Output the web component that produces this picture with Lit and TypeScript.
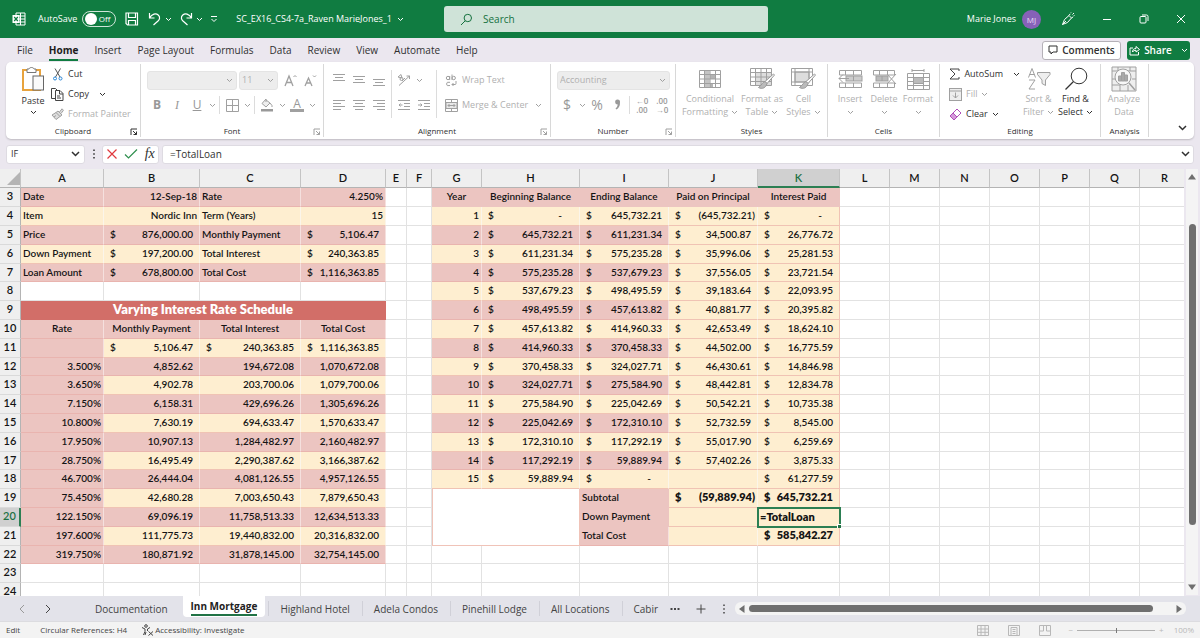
import { LitElement, html, css, svg, nothing } from "lit";
import { customElement } from "lit/decorators.js";
import { classMap } from "lit/directives/class-map.js";

type Cell = { t: string; k: string; span?: number; rows?: number; dollar?: boolean; edit?: boolean };

const icon = (w: number, h: number, body: unknown) =>
  html`<svg class="ic" width=${w} height=${h} viewBox="0 0 ${w} ${h}" fill="none" stroke="currentColor" stroke-width="1" aria-hidden="true">${body}</svg>`;

const chev = () => icon(7, 5, svg`<path d="M1 1L3.5 3.5L6 1"/>`);

const lines = (ys: number[], xs: [number, number][]) =>
  icon(12, 12, svg`${ys.map((y, i) => svg`<path d="M${xs[i][0]} ${y}H${xs[i][1]}"/>`)}`);

const gridLines = svg`<path d="M.5 .5H21.5V17.5H.5ZM.5 4.5H21.5M.5 9H21.5M.5 13.5H21.5M5.5 .5V17.5M11 .5V17.5M16.5 .5V17.5"/>`;
const brush = svg`<path d="M23.5 6L15 13.5L17 15.5L24.5 7Z" fill="#fff" stroke="#999"/><path d="M15 13.5C12.5 14 12 17 8.5 19.5C12 21.5 16 20 17 15.5Z" fill="#bbb" stroke="#999"/>`;

const I = {
  excel: icon(14, 14, svg`<path d="M4 3V1H13V13H4V11M8.5 1V13M4 4H13M4 7H13M4 10H13" /><rect x="0.5" y="3" width="7" height="8" fill="#fff" stroke="none"/><path d="M2.2 5L5.8 9M5.8 5L2.2 9" stroke="#107c41" stroke-width="1.2"/>`),
  save: icon(14, 14, svg`<path d="M1 1H12.5V13H2.5L1 11.5ZM3.5 1V5.5H10.5V1M3.5 13V8.5H10.5V13" stroke-width="1.2"/>`),
  undo: icon(14, 14, svg`<path d="M1.5 1V6H6.5M1.5 6C4 1.5 8 1 10.2 3C12.6 5.3 11.5 7.5 10 9L5.5 13" stroke-width="1.2"/>`),
  redo: icon(14, 14, svg`<path d="M12.5 1V6H7.5M12.5 6C10 1.5 6 1 3.8 3C1.4 5.3 2.5 7.5 4 9L8.5 13" stroke-width="1.2"/>`),
  more: icon(8, 8, svg`<path d="M1 1.5H7M1.5 4L4 6.5L6.5 4"/>`),
  search: icon(13, 13, svg`<circle cx="7.8" cy="5" r="3.7"/><path d="M5.2 7.8L1 12"/>`),
  pen: icon(14, 14, svg`<path d="M1.5 12.5L3.5 7.5L8 3.5L10.5 6L6.5 10.5ZM1.5 12.5L5 9M8 3.5L9 2M10.5 6L12 5M9.5 1.2L10 .5M11.5 2.5L13 1M12.5 4L13.5 3.5"/>`),
  min: icon(10, 10, svg`<path d="M1 5.5H9"/>`),
  restore: icon(10, 10, svg`<rect x="1" y="2.5" width="6" height="6.5" rx="1"/><path d="M3 1H7.5Q9 1 9 2.5V7"/>`),
  close: icon(10, 10, svg`<path d="M1 1L9 9M9 1L1 9"/>`),
  comment: icon(10, 10, svg`<path d="M1 1H9V7H5L3 9V7H1Z"/>`),
  share: icon(11, 11, svg`<path d="M4 3H1V10H9.5V7M3.5 7C3.5 4.5 5 3.5 7 3.5V1.5L10.5 4.5L7 7V5.3C5.5 5.3 4.5 5.5 3.5 7Z"/>`),
  paste: icon(24, 26, svg`<rect x="2" y="4" width="17" height="20" fill="#fff" stroke="#e8a33d" stroke-width="2"/><path d="M6 3H8C8.5 1 12.5 1 13 3H15V6.5H6Z" fill="#fff" stroke="#777"/><rect x="12" y="10" width="10.5" height="14" fill="#fafafa" stroke="#666"/>`),
  cut: icon(10, 13, svg`<path d="M2 .5L7 9M7.5 .5L2.5 9" stroke="#555"/><circle cx="2" cy="10.5" r="1.5" stroke="#2b88d8"/><circle cx="7.5" cy="10.5" r="1.5" stroke="#2b88d8"/>`),
  copy: icon(13, 13, svg`<path d="M4 10.5H.5V.5H4.5L6.5 2.5M4.5 2.5H9L12 5.5V12.5H4.5ZM8.5 2.5V6H12M6 8H9M6 10H10" stroke="#444"/>`),
  painter: icon(13, 13, svg`<path d="M1 7L5 11.5L9 8.5L5 4.5ZM3 9L5 7.5M5 4.5L7 3L11 7L9 8.5M8.5 4L11 .8L12.5 2.3L10 5.5" fill="#ddd"/>`),
  launch: icon(8, 8, svg`<path d="M1 7V1H7M3 3L6.5 6.5M6.5 3.5V6.5H3.5"/>`),
  grow: icon(13, 14, svg`<path d="M1 13L5 3L9 13M2.5 9.5H7.5" stroke-width="1.3"/><path d="M9.5 4L11 2.5L12.5 4"/>`),
  shrink: icon(13, 14, svg`<path d="M1 13L4.5 5L8 13M2.5 10H6.5" stroke-width="1.3"/><path d="M9 2.5L10.5 4L12 2.5"/>`),
  borders: icon(13, 13, svg`<path d="M.5 .5H12.5V12.5H.5ZM6.5 .5V12.5M.5 6.5H12.5"/>`),
  fillc: icon(14, 14, svg`<path d="M6 1L2 5.5L6 9L10 5L5.5 1.5M6 1V4M10 5L12 7.5V9" fill="#eee"/><rect x="1" y="11" width="12" height="2.5" fill="#999" stroke="none"/>`),
  orient: icon(14, 14, svg`<path d="M2 12.5L12.5 3M12.5 3H9.5M12.5 3V6M1 4L4 1.5L5 5ZM5 8L8 5"/><circle cx="4.5" cy="6" r="1.5"/>`),
  outdent: icon(13, 12, svg`<path d="M0 1.5H12M6 4.5H12M6 7.5H12M0 10.5H12M4.5 6H1M2.5 4.5L1 6L2.5 7.5"/>`),
  indent: icon(13, 12, svg`<path d="M0 1.5H12M6 4.5H12M6 7.5H12M0 10.5H12M0 6H4M2.5 4.5L4 6L2.5 7.5"/>`),
  wrap: icon(13, 13, svg`<circle cx="3" cy="4" r="1.7"/><path d="M4.7 2V6M7 .5V6"/><circle cx="8.7" cy="4" r="1.7"/><path d="M5 8.3Q1.5 7.5 1.5 10Q1.5 12.5 5 11.5M11 7V9.5Q11 10.5 10 10.5H7M8.5 9L7 10.5L8.5 12"/>`),
  merge: icon(13, 13, svg`<path d="M.5 .5H12.5V12.5H.5ZM6.5 .5V3.5M6.5 9.5V12.5"/><rect x="1" y="3.5" width="11" height="6" fill="#e8e8e8"/><path d="M3 6.5H10M4.5 5L3 6.5L4.5 8M8.5 5L10 6.5L8.5 8"/>`),
  comma: icon(7, 12, svg`<path d="M3.5 .5A2.5 2.5 0 1 0 3.8 5.5Q3.5 8 1.5 9.5L2.5 10.5Q6.2 8 6 3.2A2.5 2.5 0 0 0 3.5 .5Z" fill="#999" stroke="none"/>`),
  cond: icon(22, 18, svg`<rect x="5.5" y="1" width="5" height="16" fill="#c4c4c4" stroke="none"/><rect x="11" y="5" width="5" height="4" fill="#b4b4b4" stroke="none"/><rect x="11" y="13.5" width="3" height="3.5" fill="#b4b4b4" stroke="none"/>${gridLines}`),
  fmtTable: icon(25, 22, svg`<rect x="5.5" y="4.5" width="16" height="13" fill="#ddd" stroke="none"/>${gridLines}${brush}`),
  cellStyle: icon(25, 22, svg`<rect x="4" y="4" width="14" height="10" fill="#ddd"/><path d="M.5 .5H21.5V17.5H.5ZM4 .5V17.5M.5 4H21.5M18 .5V10M.5 14H14"/>${brush}`),
  insert: icon(25, 20, svg`<path d="M1.5 1.5H23.5V6H1.5ZM7.5 1.5V6M15.5 1.5V6M1.5 18.5H23.5V14H1.5ZM7.5 14V18.5M15.5 14V18.5"/><rect x="8" y="7" width="16" height="5" fill="#ccc"/><path d="M15.5 7V12M11 9.5H1M5 5.5L1 9.5L5 13.5"/>`),
  del: icon(25, 20, svg`<path d="M1.5 1.5H22.5V6H1.5ZM7.5 1.5V6M15.5 1.5V6M1.5 18.5H22.5V14H1.5ZM7.5 14V18.5M15.5 14V18.5"/><rect x="4" y="7" width="12" height="5" fill="#bbb"/><path d="M10 7V12M15 5L24 15M24 5L15 15"/>`),
  format: icon(25, 22, svg`<path d="M6 1V4M18 1V4M6 2.5H18M1.5 5.5H23.5V21.5H1.5ZM1.5 9.5H23.5M1.5 13.5H23.5M1.5 17.5H23.5M7.5 5.5V21.5M17.5 5.5V21.5"/><rect x="7.5" y="9.5" width="10" height="6" fill="#bbb"/>`),
  sum: icon(11, 12, svg`<path d="M10 3V1H1L6 6L1 11H10V9" stroke="#444"/>`),
  fill: icon(13, 13, svg`<rect x=".5" y=".5" width="12" height="12" fill="#eee"/><path d="M.5 3H12.5M6.5 4.5V10M4 7.5L6.5 10L9 7.5"/>`),
  clear: icon(13, 13, svg`<path d="M1 8L8 1L12 5L5 12Z" fill="#fff" stroke="#b04fb8"/><path d="M1 8L4 5L8 9L5 12Z" fill="#d59ada" stroke="#b04fb8"/>`),
  sort: icon(24, 24, svg`<path d="M1.5 10.5L5 1.5L8.5 10.5M2.5 7.5H7.5M2 13H8L2 22H8"/><path d="M10.5 5.5H23V7.5L18.5 13V18.5L15 16.5V13L10.5 7.5Z" fill="#eee"/>`),
  find: icon(24, 24, svg`<circle cx="15" cy="9" r="7.8" stroke="#333"/><path d="M9.5 14.5L1.5 22.5" stroke="#333" stroke-width="1.2"/>`),
  analyze: icon(26, 26, svg`<path d="M1 1H25V25H1Z" fill="#eee"/><path d="M1 5H25M1 13H5M1 19H9M7 1V5M19 1V5M21 13H25M9 19V25M17 19V25"/><circle cx="12" cy="11" r="8" fill="#f8f8f8"/><path d="M18 17L24 24" stroke-width="1.5"/><path d="M7.5 15V10H10.5V15ZM10.5 15V6.5H13.5V15ZM13.5 15V9H16.5V15Z" fill="#aaa"/>`),
  cross: icon(12, 12, svg`<path d="M1.5 1.5L10.5 10.5M10.5 1.5L1.5 10.5" stroke="#e0393e" stroke-width="1.2"/>`),
  tick: icon(14, 12, svg`<path d="M1 6.5L4.5 10L13 1.5" stroke="#2f8f4e" stroke-width="1.2"/>`),
  bigChev: icon(9, 6, svg`<path d="M1 1L4.5 4.5L8 1" stroke-width="1.5"/>`),
  left: icon(6, 10, svg`<path d="M5 1L1 5L5 9" stroke="#999"/>`),
  right: icon(6, 10, svg`<path d="M1 1L5 5L1 9"/>`),
  plus: icon(10, 10, svg`<path d="M5 .5V9.5M.5 5H9.5"/>`),
  dots: icon(4, 10, svg`<path d="M2 .5V2M2 4.2V5.7M2 8V9.5" stroke-width="1.5"/>`),
  hdots: icon(10, 4, svg`<path d="M.5 2H2.5M4 2H6M7.5 2H9.5" stroke-width="1.8"/>`),
  access: icon(13, 12, svg`<circle cx="5" cy="2" r="1.3"/><path d="M1 3.5L4 5V7.5L2.5 11M9 3.5L6.5 5V7M5 8L4 11M7.5 7.5L12 11.5M12 7.5L7.5 11.5"/>`),
  view1: icon(12, 11, svg`<path d="M.5 .5H11.5V10.5H.5ZM.5 4H11.5M.5 7.3H11.5M4 .5V10.5M8 .5V10.5"/>`),
  view2: icon(12, 11, svg`<path d="M.5 .5H11.5V10.5H.5ZM3 2.5H9V10.5M3 2.5V10.5M4.5 4.5H7.5M4.5 6.5H7.5M4.5 8.5H7.5"/>`),
  view3: icon(12, 11, svg`<path d="M.5 .5H11.5V10.5H.5ZM4.5 .5V6H.5M7.5 .5V6H11.5"/>`),
};

const LOAN: [string, string, boolean, string, string, boolean][] = [
  ["Date", "12-Sep-18", false, "Rate", "4.250%", false],
  ["Item", "Nordic Inn", false, "Term (Years)", "15", false],
  ["Price", "876,000.00", true, "Monthly Payment", "5,106.47", true],
  ["Down Payment", "197,200.00", true, "Total Interest", "240,363.85", true],
  ["Loan Amount", "678,800.00", true, "Total Cost", "1,116,363.85", true],
];

const RATES: string[][] = [
  ["", "5,106.47", "240,363.85", "1,116,363.85"],
  ["3.500%", "4,852.62", "194,672.08", "1,070,672.08"],
  ["3.650%", "4,902.78", "203,700.06", "1,079,700.06"],
  ["7.150%", "6,158.31", "429,696.26", "1,305,696.26"],
  ["10.800%", "7,630.19", "694,633.47", "1,570,633.47"],
  ["17.950%", "10,907.13", "1,284,482.97", "2,160,482.97"],
  ["28.750%", "16,495.49", "2,290,387.62", "3,166,387.62"],
  ["46.700%", "26,444.04", "4,081,126.55", "4,957,126.55"],
  ["75.450%", "42,680.28", "7,003,650.43", "7,879,650.43"],
  ["122.150%", "69,096.19", "11,758,513.33", "12,634,513.33"],
  ["197.600%", "111,775.73", "19,440,832.00", "20,316,832.00"],
  ["319.750%", "180,871.92", "31,878,145.00", "32,754,145.00"],
];

const YEARS: string[][] = [
  ["-", "645,732.21", "(645,732.21)", "-"],
  ["645,732.21", "611,231.34", "34,500.87", "26,776.72"],
  ["611,231.34", "575,235.28", "35,996.06", "25,281.53"],
  ["575,235.28", "537,679.23", "37,556.05", "23,721.54"],
  ["537,679.23", "498,495.59", "39,183.64", "22,093.95"],
  ["498,495.59", "457,613.82", "40,881.77", "20,395.82"],
  ["457,613.82", "414,960.33", "42,653.49", "18,624.10"],
  ["414,960.33", "370,458.33", "44,502.00", "16,775.59"],
  ["370,458.33", "324,027.71", "46,430.61", "14,846.98"],
  ["324,027.71", "275,584.90", "48,442.81", "12,834.78"],
  ["275,584.90", "225,042.69", "50,542.21", "10,735.38"],
  ["225,042.69", "172,310.10", "52,732.59", "8,545.00"],
  ["172,310.10", "117,292.19", "55,017.90", "6,259.69"],
  ["117,292.19", "59,889.94", "57,402.26", "3,875.33"],
  ["59,889.94", "-", "", "61,277.59"],
];

const c = (t: string, k: string, extra: Partial<Cell> = {}): Cell => ({ t, k, ...extra });
const blanks = (n: number) => Array.from({ length: n }, () => c("", ""));
const money = (t: string, k: string): Cell =>
  c(t, `${k} acct ${t.startsWith("(") ? "paren" : ""} ${t === "-" ? "dash" : ""}`, { dollar: true });

function leftCells(r: number): Cell[] {
  const tone = r % 2 ? "pink" : "cream";
  if (r <= 7) {
    const [a, b, bd, d, e, ed] = LOAN[r - 3];
    return [c(a, tone), bd ? money(b, tone) : c(b, tone + " r"), c(d, tone), ed ? money(e, tone) : c(e, tone + " r")];
  }
  if (r === 9) return [c("Varying Interest Rate Schedule", "red", { span: 4 })];
  if (r === 10) return ["Rate", "Monthly Payment", "Total Interest", "Total Cost"].map((t) => c(t, "pink mid"));
  if (r >= 11 && r <= 22) {
    const t2 = r % 2 ? "cream" : "pink";
    const [a, ...rest] = RATES[r - 11];
    return [c(a, "pink r"), ...rest.map((t) => (r === 11 ? money(t, t2) : c(t, t2 + " acct")))];
  }
  return blanks(4);
}

function rightCells(r: number): Cell[] {
  if (r === 3) return ["Year", "Beginning Balance", "Ending Balance", "Paid on Principal", "Interest Paid"].map((t) => c(t, "pink plain mid"));
  if (r <= 18) {
    const tone = r % 2 ? "pink" : "cream";
    const [h, i, j, k] = YEARS[r - 4];
    return [c(String(r - 3), tone + " r"), money(h, tone), money(i, tone), j ? money(j, "cream") : c("", "cream"), money(k, "cream last")];
  }
  if (r === 19) return [c("", "merged", { span: 2, rows: 3 }), c("Subtotal", "pink plain"), money("(59,889.94)", "cream bold"), money("645,732.21", "cream bold last")];
  if (r === 20) return [c("Down Payment", "pink plain"), c("", "cream"), c("=TotalLoan", "cream bold edit", { edit: true })];
  if (r === 21) return [c("Total Cost", "pink"), c("", "cream"), money("585,842.27", "cream bold last")];
  return blanks(5);
}

const COLS = "ABCDEFGHIJKLMNOPQR".split("");
const ROWS = Array.from({ length: 22 }, (_, i) => i + 3);
const MENU = ["File", "Home", "Insert", "Page Layout", "Formulas", "Data", "Review", "View", "Automate", "Help"];
const SHEETS = ["Documentation", "Inn Mortgage", "Highland Hotel", "Adela Condos", "Pinehill Lodge", "All Locations", "Cabir"];

@customElement("app-root")
export class AppRoot extends LitElement {
  static styles = css`
    :host { display: flex; flex-direction: column; height: 100vh; overflow: hidden; background: #ebe7ef; color: #303030; font: 9px/12px "Open Sans", "Noto Sans", sans-serif; }
    * { box-sizing: border-box; }
    button, input, select { font: inherit; color: inherit; background: none; border: 0; padding: 0; margin: 0; border-radius: 0; }
    button { display: flex; align-items: center; justify-content: center; white-space: nowrap; }
    .ic { display: block; flex: none; }
    .grow { flex: 1; }

    .title { flex: none; display: grid; grid-template-columns: 37fr 27fr 36fr; align-items: center; height: 38px; background: #107c41; color: #fff; }
    .tl { display: flex; align-items: center; padding-left: 12px; white-space: nowrap; }
    .auto { display: flex; align-items: center; gap: 5px; margin-left: 12px; }
    .switch { position: relative; display: flex; align-items: center; justify-content: flex-end; width: 34px; height: 16px; padding-right: 5px; border: 1px solid #cfe5d8; border-radius: 8px; font-size: 8px; }
    .switch input { position: absolute; left: 2px; top: 1px; appearance: none; width: 12px; height: 12px; border-radius: 6px; background: #fff; }
    .tl button { margin-left: 9px; }
    .tl .drop { margin-left: 3px; }
    .tl .drop + button { margin-left: 7px; }
    .tl .file { gap: 5px; margin-left: 18px; }
    .search { display: flex; align-items: center; gap: 10px; height: 26px; padding-left: 16px; border-radius: 3px; background: #cfe3d8; color: #14713e; font-size: 10px; }
    .search input { flex: 1; min-width: 0; }
    .search input::placeholder { color: #14713e; opacity: 1; }
    .tr { display: flex; align-items: center; justify-content: flex-end; padding-right: 14px; }
    .avatar { width: 19px; height: 19px; margin: 0 20px 0 6px; border-radius: 10px; background: #8661b8; color: #e9dff5; font-size: 8px; line-height: 19px; text-align: center; }
    .tr button { margin-right: 27px; }
    .tr button:last-child { margin-right: 0; }

    .menu { flex: none; display: flex; align-items: center; height: 24px; padding: 0 10px 0 17px; font-size: 10px; }
    .menu nav { display: flex; gap: 16px; flex: 1; }
    .menu nav button { height: 21px; padding-top: 2px; border-bottom: 2px solid transparent; }
    .menu nav .on { font-weight: 700; color: #1c1c1c; border-color: #107c41; }
    .comments, .share { height: 19px; gap: 4px; border-radius: 3px; font-weight: 600; }
    .comments { width: 79px; background: #fff; border: 1px solid #b5b1b8; }
    .share { width: 63px; margin-left: 6px; background: #107c41; color: #fff; }
    .share .ic:last-child { margin-left: 5px; }

    .ribbon { flex: none; display: flex; height: 77px; margin: 0 6px; padding-top: 2px; border-radius: 5px; background: #fff; box-shadow: 0 1px 2px #0003; color: #303030; }
    .group { flex: none; display: flex; flex-direction: column; height: 73px; border-right: 1px solid #d8d8d8; }
    .body { display: flex; flex: 1; min-height: 0; }
    .glabel { position: relative; height: 12px; text-align: center; font-size: 8px; line-height: 12px; }
    .launch { position: absolute; right: 2px; top: 3px; }
    .dim, .dim button { color: #b0b0b0; }
    .dim .ic { color: #a0a0a0; }
    .wclip { width: 135px; } .wfont { width: 183px; } .walign { width: 227px; } .wnum { width: 125px; }
    .wstyle { width: 152px; } .wcell { width: 112px; } .wedit { width: 161px; } .wana { width: 48px; }
    .big { flex-direction: column; justify-content: flex-start; line-height: 12px; gap: 1px; padding-top: 2px; }
    .big .pic { display: flex; align-items: center; justify-content: center; height: 26px; }
    .big .ln { display: flex; align-items: center; gap: 3px; height: 12px; }
    .paste { margin-left: 9px; width: 36px; gap: 3px; }
    .list { display: flex; flex-direction: column; }
    .list button { height: 20px; justify-content: flex-start; gap: 4px; }
    .list .pic { display: flex; justify-content: center; width: 13px; }
    .list .far { margin-left: 6px; }
    .two { display: flex; flex-direction: column; gap: 5px; padding: 6px 0 0 6px; }
    .row { display: flex; align-items: center; height: 20px; }
    .sel { appearance: none; height: 19px; border-radius: 3px; background: #ededed; border: 1px solid #e4e4e4; padding: 0 2px; opacity: 1; color: #b0b0b0; width: 100%; }
    .pick { position: relative; display: flex; align-items: center; margin-right: 2px; }
    .pick .ic { position: absolute; right: 4px; pointer-events: none; }
    .w90 { width: 90px; } .w39 { width: 39px; } .w113 { width: 113px; }
    .b20 { width: 20px; } .b10 { width: 10px; }
    .sep { flex: none; width: 1px; height: 18px; margin: 0 2px; background: #dcdcdc; }
    .tall { height: 48px; margin: 6px 2px 0; }
    .glyph { font-size: 12px; color: #989898; }
    .glyph.b { font-weight: 700; }
    .glyph.i { font-family: "Liberation Serif", serif; font-style: italic; }
    .glyph.u { text-decoration: underline; }
    .glyph.n { font-size: 14px; }
    .under { border-bottom: 3px solid #a0a0a0; line-height: 11px; padding: 0 3px; }
    .grid3 { display: grid; grid-template-columns: repeat(3, 20px); grid-auto-rows: 20px; row-gap: 5px; padding: 6px 0 0 5px; align-content: start; }
    .grid2 { display: grid; grid-template-columns: repeat(2, 20px); grid-auto-rows: 20px; row-gap: 5px; padding: 6px 0 0; align-content: start; }
    .wrapcol { align-items: flex-start; }
    .wrapcol button { gap: 4px; }
    .dec { font-size: 8px; line-height: 9px; width: 20px; flex-direction: column; font-weight: 600; }
    .dim .dec { color: #999; }
    .bigs { display: flex; align-items: flex-start; }
    .b58 { width: 58px; } .b46 { width: 46px; } .b37 { width: 37px; } .b34 { width: 34px; }
    .pad { padding-left: 5px; }
    .tools { padding-left: 9px; width: 80px; }
    .endcap { flex: 1; display: flex; align-items: flex-end; justify-content: flex-end; padding: 0 7px 8px 0; }

    .fx { flex: none; display: flex; align-items: center; height: 30px; padding: 0 6px; }
    .box { display: flex; align-items: center; height: 19px; border: 1px solid #dedbe2; border-radius: 3px; background: #fff; }
    .name { width: 79px; padding: 0 4px; justify-content: space-between; }
    .name input { width: 60px; }
    .fx .gap { width: 17px; display: flex; justify-content: center; }
    .acts { width: 57px; justify-content: space-around; }
    .fxi { font: italic 14px/14px "Liberation Serif", serif; }
    .formula { flex: 1; margin-left: 3px; padding: 0 3px 0 7px; font-size: 10px; }
    .formula input { flex: 1; font-size: 10px; }

    .work { flex: 1; min-height: 0; display: flex; }
    .sheet { flex: 1; min-width: 0; overflow: hidden; background: #fff; }
    .vbar { width: 16px; display: flex; flex-direction: column; align-items: center; margin-bottom: 1px; background: linear-gradient(#f4f4f4, #f4f4f4) center / 12px 100% no-repeat; }
    .vbar .arrow { height: 16px; display: flex; align-items: center; }
    .vtrack { flex: 1; width: 7px; padding: 39px 0 54px; }
    .vthumb { height: 100%; border-radius: 4px; background: #6f6f6f; }
    table { table-layout: fixed; border-collapse: separate; border-spacing: 0; width: 1190px; font: 600 10px/14px Lato, "Open Sans", sans-serif; color: #141414; }
    th { padding: 0; background: #efefef; font-size: 11px; font-weight: 600; border-right: 1px solid #c4c4c4; border-bottom: 1px solid #b4b4b4; }
    thead th { height: 19px; }
    tbody th { padding-bottom: 2px; border-right-color: #b4b4b4; border-bottom-color: #dadada; }
    thead th.cur { background: #d0d0d0; color: #1d7044; border-bottom: 2px solid #2c7f53; }
    tbody th.cur { background: #d0d0d0; color: #1d7044; border-right: 2px solid #2c7f53; }
    .corner span { display: block; width: 0; height: 0; margin: 0 0 0 auto; border-left: 13px solid transparent; border-bottom: 13px solid #b4b4b4; }
    tbody tr { height: 19px; }
    tbody tr:nth-child(5n) { height: 18px; }
    td { padding: 0 2px 2px; white-space: nowrap; overflow: hidden; border-right: 1px solid #e2e2e2; border-bottom: 1px solid #e2e2e2; }
    td.pink { background: #ecc5c1; border-color: #e9b4af; border-right-color: #f5e0de; }
    td.cream { background: #feeed0; border-color: #f0c3b4; border-right-color: #fbf5ea; }
    td.last { border-right-color: #f0c3b4; }
    td.plain { border-color: #ecc5c1; }
    td.red { background: #d26e68; border-color: #d26e68; color: #fff; font-size: 13px; font-weight: 800; text-align: center; }
    td.r { text-align: right; }
    td.mid { text-align: center; }
    td.acct { text-align: right; padding-left: 6px; padding-right: 6px; }
    td.acct .pair { display: flex; justify-content: space-between; }
    td.paren { padding-right: 2px; }
    td.dash { padding-right: 17px; }
    td.bold { font-weight: 800; font-size: 11px; }
    td.merged { border-color: #f0c3b8; border-left: 1px solid #f0c3b8; }
    td.edit { overflow: visible; padding: 0; outline: 2px solid #2c7f53; outline-offset: -1px; position: relative; }
    td.edit input { display: block; width: 100%; height: 14px; padding-left: 2px; font-weight: 800; }
    .knob { position: absolute; right: -2px; bottom: -2px; width: 4px; height: 4px; background: #217346; border-top: 1px solid #fff; border-left: 1px solid #fff; }
    .h { width: 21px; } .A { width: 83px; } .B { width: 96px; } .C { width: 101px; } .D { width: 85px; } .E { width: 21px; } .F { width: 25px; }
    .G { width: 50px; } .H { width: 98px; } .I { width: 89px; } .J { width: 89px; } .K { width: 82px; }

    .tabs { flex: none; display: flex; height: 25px; background: #e3e3ea; font-size: 10px; color: #444; }
    .nav { width: 83px; display: flex; align-items: center; gap: 20px; padding-left: 19px; }
    .tabs .tab { height: 25px; padding: 0 12px; position: relative; }
    .tabs .tab + .tab::before { content: ""; position: absolute; left: 0; top: 5px; height: 15px; border-left: 1px solid #d0d0d8; }
    .tabs .on { height: 21px; padding: 0 8px; margin: 0 3px; background: #fff; border-radius: 0 0 4px 4px; font-weight: 700; color: #222; }
    .tabs .on span { border-bottom: 2px solid #217346; line-height: 16px; }
    .tabs .tab.on::before { display: none; }
    .tail { display: flex; align-items: center; gap: 16px; }
    .hbar { flex: 1; display: flex; align-items: center; height: 13px; margin: 6px 14px 0 9px; padding: 0 4px; border-radius: 6px; background: #f4f4f4; }
    .htrack { flex: 1; padding: 0 23px 0 4px; }
    .hthumb { height: 7px; border-radius: 4px; background: #6f6f6f; }
    .status { flex: none; display: flex; align-items: center; height: 17px; padding: 0 6px; background: #f3f3f3; border-top: 1px solid #dcdce0; font-size: 8px; color: #444; }
    .status .a { margin-right: 20px; }
    .status .acc { gap: 1px; margin-left: -6px; }
    .views { display: flex; gap: 19px; color: #b8b8b8; align-items: center; }
    .zoom { display: flex; align-items: center; gap: 4px; margin-left: 18px; color: #b8b8b8; }
    .zoom input { appearance: none; width: 78px; height: 5px; background: linear-gradient(#b0b0b0, #b0b0b0) center / 100% 1px no-repeat; }
    .zoom input::-webkit-slider-thumb { appearance: none; width: 1px; height: 5px; background: #777; }
    .pct { margin-left: 6px; }
  `;

  private big(pic: unknown, l1: string, l2: unknown, cls: string, dim = true) {
    return html`<button class="big ${cls}" ?disabled=${dim}>
      <span class="pic">${pic}</span><span class="ln">${l1}</span><span class="ln">${l2}</span>
    </button>`;
  }

  private group(cls: string, label: string, body: unknown, launcher?: "on" | "off") {
    return html`<section class="group ${cls}" aria-label=${label}>
      <div class="body">${body}</div>
      <div class="glabel">${label}${launcher
        ? html`<button class="launch ${launcher === "off" ? "dim" : ""}" aria-label="${label} settings">${I.launch}</button>`
        : nothing}</div>
    </section>`;
  }

  private tool(content: unknown, label: string, cls = "b20") {
    return html`<button class=${cls} disabled aria-label=${label}>${content}</button>`;
  }

  private cell(x: Cell) {
    return html`<td class=${x.k} colspan=${x.span ?? 1} rowspan=${x.rows ?? 1}>${
      x.edit ? html`<input aria-label="K20" .value=${x.t} /><span class="knob"></span>`
      : x.dollar ? html`<div class="pair"><span>$</span><span>${x.t}</span></div>` : x.t
    }</td>`;
  }

  private ribbon() {
    const full: [number, number][] = [[0, 12], [2, 10], [0, 12], [2, 10]];
    return html`<div class="ribbon">
      ${this.group("wclip", "Clipboard", html`
        <button class="big paste"><span class="pic">${I.paste}</span><span class="ln">Paste</span>${chev()}</button>
        <div class="list">
          <button><span class="pic">${I.cut}</span>Cut</button>
          <button><span class="pic">${I.copy}</span>Copy<span class="far">${chev()}</span></button>
          <button class="dim" disabled><span class="pic">${I.painter}</span>Format Painter</button>
        </div>`, "on")}
      ${this.group("wfont", "Font", html`<div class="two dim">
        <div class="row">
          <div class="pick w90"><select class="sel" disabled aria-label="Font name"><option></option></select>${chev()}</div>
          <div class="pick w39"><select class="sel" disabled aria-label="Font size"><option>11</option></select>${chev()}</div>
          ${this.tool(I.grow, "Grow font")}${this.tool(I.shrink, "Shrink font")}
        </div>
        <div class="row">
          ${this.tool(html`<span class="glyph b">B</span>`, "Bold")}${this.tool(html`<span class="glyph i">I</span>`, "Italic")}
          ${this.tool(html`<span class="glyph u">U</span>`, "Underline")}${this.tool(chev(), "Underline styles", "b10")}
          <span class="sep"></span>${this.tool(I.borders, "Borders")}${this.tool(chev(), "Border styles", "b10")}
          <span class="sep"></span>${this.tool(I.fillc, "Fill colour")}${this.tool(chev(), "Fill colours", "b10")}
          ${this.tool(html`<span class="glyph under">A</span>`, "Font colour")}${this.tool(chev(), "Font colours", "b10")}
        </div></div>`, "off")}
      ${this.group("walign", "Alignment", html`
        <div class="grid3 dim">
          ${this.tool(lines([0.5, 3.5, 6.5], full), "Top align")}${this.tool(lines([2.5, 5.5, 8.5], full), "Middle align")}${this.tool(lines([5.5, 8.5, 11.5], full), "Bottom align")}
          ${this.tool(lines([1.5, 4.5, 7.5, 10.5], [[0, 12], [0, 8], [0, 12], [0, 8]]), "Align left")}${this.tool(lines([1.5, 4.5, 7.5, 10.5], full), "Centre")}${this.tool(lines([1.5, 4.5, 7.5, 10.5], [[0, 12], [4, 12], [0, 12], [4, 12]]), "Align right")}
        </div><span class="sep tall"></span>
        <div class="grid2 dim">${this.tool(I.orient, "Orientation")}${this.tool(chev(), "Orientation options", "b10")}${this.tool(I.outdent, "Decrease indent")}${this.tool(I.indent, "Increase indent")}</div>
        <span class="sep tall"></span>
        <div class="two wrapcol dim">
          <button class="row" disabled>${I.wrap}Wrap Text</button>
          <div class="row"><button disabled>${I.merge}Merge &amp; Center</button>${this.tool(chev(), "Merge options", "b20")}</div>
        </div>`, "off")}
      ${this.group("wnum", "Number", html`<div class="two dim">
        <div class="row"><div class="pick w113"><select class="sel" disabled aria-label="Number format"><option>Accounting</option></select>${chev()}</div></div>
        <div class="row">${this.tool(html`<span class="glyph n">$</span>`, "Currency")}${this.tool(chev(), "Currencies", "b10")}
          ${this.tool(html`<span class="glyph n">%</span>`, "Percent", "b20")}${this.tool(I.comma, "Comma")}
          <span class="sep"></span>
          <button class="dec" disabled aria-label="Increase decimal"><span>←0</span><span>.00</span></button>
          <button class="dec" disabled aria-label="Decrease decimal"><span>.00</span><span>→0</span></button></div>
        </div>`, "off")}
      ${this.group("wstyle", "Styles", html`<div class="bigs dim pad">
        ${this.big(I.cond, "Conditional", html`Formatting ${chev()}`, "b58")}
        ${this.big(I.fmtTable, "Format as", html`Table ${chev()}`, "b46")}
        ${this.big(I.cellStyle, "Cell", html`Styles ${chev()}`, "b37")}</div>`)}
      ${this.group("wcell", "Cells", html`<div class="bigs dim pad">
        ${this.big(I.insert, "Insert", chev(), "b34")}${this.big(I.del, "Delete", chev(), "b34")}${this.big(I.format, "Format", chev(), "b34")}</div>`)}
      ${this.group("wedit", "Editing", html`<div class="list tools">
          <button><span class="pic">${I.sum}</span>AutoSum<span class="far">${chev()}</span></button>
          <button class="dim" disabled><span class="pic">${I.fill}</span>Fill ${chev()}</button>
          <button><span class="pic">${I.clear}</span>Clear ${chev()}</button>
        </div>
        <div class="bigs"><span class="dim">${this.big(I.sort, "Sort &", html`Filter ${chev()}`, "b37")}</span>
        ${this.big(I.find, "Find &", html`Select ${chev()}`, "b37", false)}</div>`)}
      ${this.group("wana", "Analysis", html`<div class="bigs dim">${this.big(I.analyze, "Analyze", "Data", "b46")}</div>`)}
      <div class="endcap"><button aria-label="Collapse ribbon">${I.bigChev}</button></div>
    </div>`;
  }

  render() {
    return html`
      <header class="title">
        <div class="tl">${I.excel}
          <label class="auto">AutoSave<span class="switch"><input type="checkbox" role="switch" />Off</span></label>
          <button aria-label="Save">${I.save}</button>
          <button aria-label="Undo">${I.undo}</button><button class="drop" aria-label="Undo history">${chev()}</button>
          <button aria-label="Redo">${I.redo}</button><button class="drop" aria-label="Redo history">${chev()}</button>
          <button aria-label="Customize">${I.more}</button>
          <button class="file">SC_EX16_CS4-7a_Raven MarieJones_1 ${chev()}</button>
        </div>
        <label class="search">${I.search}<input type="search" placeholder="Search" aria-label="Search" /></label>
        <div class="tr">Marie Jones<span class="avatar">MJ</span>
          <button aria-label="Drawing">${I.pen}</button><button aria-label="Minimize">${I.min}</button>
          <button aria-label="Restore">${I.restore}</button><button aria-label="Close">${I.close}</button></div>
      </header>
      <div class="menu">
        <nav>${MENU.map((m) => html`<button class=${classMap({ on: m === "Home" })}>${m}</button>`)}</nav>
        <button class="comments">${I.comment}Comments</button>
        <button class="share">${I.share}Share${chev()}</button>
      </div>
      ${this.ribbon()}
      <div class="fx">
        <div class="box name"><input aria-label="Name box" .value=${"IF"} />${I.bigChev}</div>
        <span class="gap">${I.dots}</span>
        <div class="box acts"><button aria-label="Cancel">${I.cross}</button><button aria-label="Enter">${I.tick}</button><button class="fxi" aria-label="Insert function">fx</button></div>
        <div class="box formula"><input aria-label="Formula" .value=${"=TotalLoan"} />${I.bigChev}</div>
      </div>
      <div class="work">
        <div class="sheet"><table>
          <colgroup><col class="h" />${COLS.map((l) => html`<col class=${l} />`)}</colgroup>
          <thead><tr><th class="corner"><span></span></th>${COLS.map((l) => html`<th scope="col" class=${classMap({ cur: l === "K" })}>${l}</th>`)}</tr></thead>
          <tbody>${ROWS.map((r) => html`<tr><th scope="row" class=${classMap({ cur: r === 20 })}>${r}</th>
            ${[...leftCells(r), ...blanks(2), ...rightCells(r), ...blanks(7)].map((x) => this.cell(x))}</tr>`)}</tbody>
        </table></div>
        <div class="vbar"><span class="arrow">${icon(8, 6, svg`<path d="M4 0L8 5.5H0Z" fill="#6f6f6f" stroke="none"/>`)}</span>
          <div class="vtrack"><div class="vthumb"></div></div>
          <span class="arrow">${icon(8, 6, svg`<path d="M4 6L8 .5H0Z" fill="#6f6f6f" stroke="none"/>`)}</span></div>
      </div>
      <div class="tabs">
        <div class="nav"><button aria-label="Previous sheet">${I.left}</button><button aria-label="Next sheet">${I.right}</button></div>
        ${SHEETS.map((s) => html`<button class=${classMap({ tab: true, on: s === "Inn Mortgage" })}><span>${s}</span></button>`)}
        <div class="tail"><button aria-label="More sheets">${I.hdots}</button><button aria-label="New sheet">${I.plus}</button>${I.dots}</div>
        <div class="hbar">${icon(6, 8, svg`<path d="M0 4L5.5 0V8Z" fill="#6f6f6f" stroke="none"/>`)}
          <div class="htrack"><div class="hthumb"></div></div>
          ${icon(6, 8, svg`<path d="M6 4L.5 0V8Z" fill="#6f6f6f" stroke="none"/>`)}</div>
      </div>
      <footer class="status"><span class="a">Edit</span><span class="a">Circular References: H4</span>
        <button class="acc">${I.access}Accessibility: Investigate</button><span class="grow"></span>
        <div class="views"><button aria-label="Normal view">${I.view1}</button><button aria-label="Page layout view">${I.view2}</button><button aria-label="Page break view">${I.view3}</button></div>
        <div class="zoom"><span>−</span><input type="range" min="10" max="190" value="100" aria-label="Zoom" /><span>+</span><span class="pct">100%</span></div>
      </footer>`;
  }
}
